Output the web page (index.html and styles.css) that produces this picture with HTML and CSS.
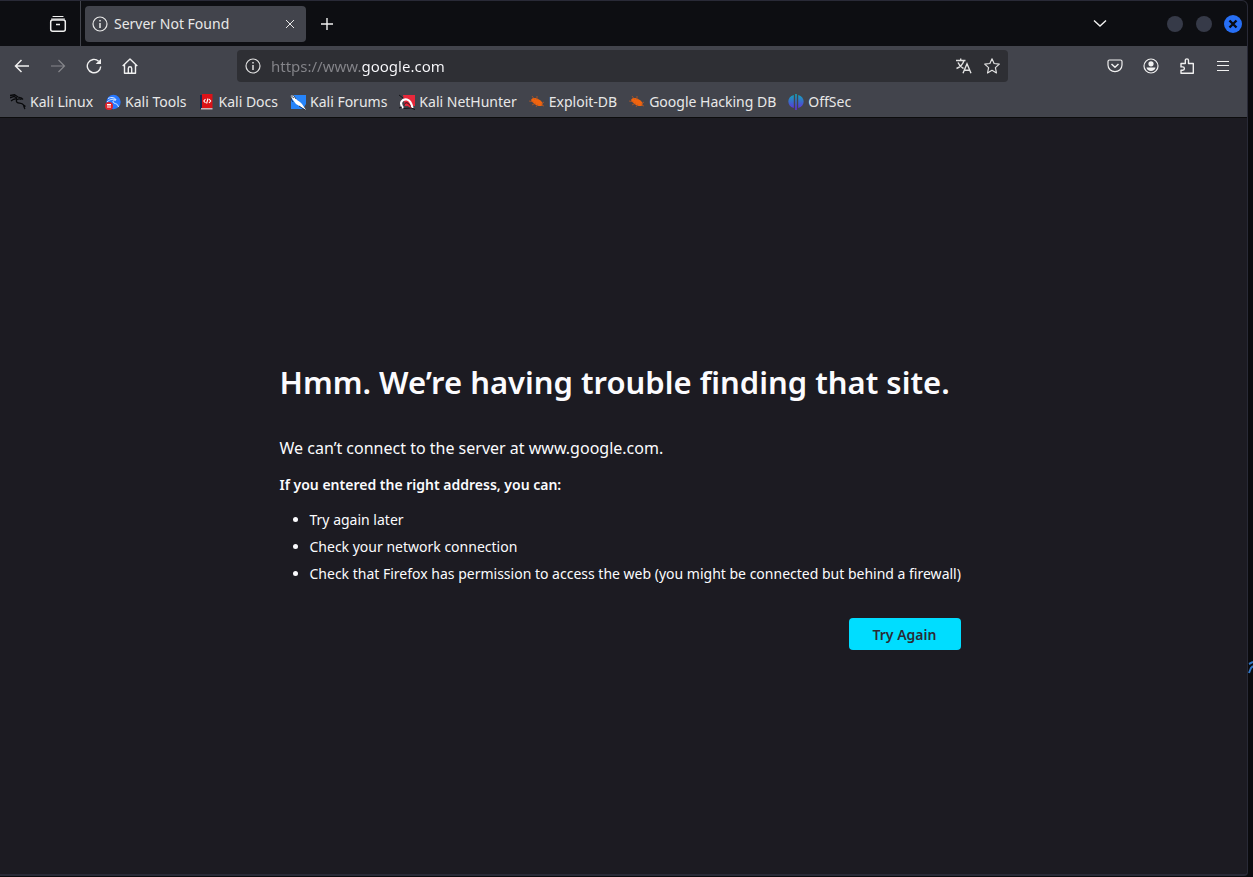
FILE: index.html
```html
<!DOCTYPE html>
<html lang="en">
<head>
<meta charset="utf-8">
<title>Server Not Found</title>
<link rel="stylesheet" href="styles.css">
</head>
<body>
<div class="desktop">
<svg class="wallpaper-mark" viewBox="0 0 5 14" aria-hidden="true"><path d="M1 4 5 2M1 13 3 8 5 6" fill="none" stroke="#3478c8" stroke-width="2"/></svg>
<div class="window">
  <header class="chrome">
    <div class="tabbar">
      <button class="icon-btn view" aria-label="Firefox View"><svg class="icon" viewBox="0 0 18 18"><path d="M4 1.500h10M2.500 4h13" stroke-linecap="round"/><rect x="1.700" y="5" width="14.600" height="11.300" rx="2" stroke-width="1.500"/><path d="M7 9.500h4" stroke-width="1.500"/></svg></button>
      <div class="tab">
        <svg class="icon" viewBox="0 0 16 16"><circle cx="8" cy="8" r="7"/><path d="M8 7v5M8 4v1.600" stroke-width="1.500"/></svg>
        <span class="tab-title">Server Not Found</span>
        <button class="close-tab" aria-label="Close tab"><svg class="icon-small" viewBox="0 0 10 10"><path d="m1 1 8 8M9 1 1 9" stroke-width="1"/></svg></button>
      </div>
      <button class="icon-btn new-tab" aria-label="New tab"><svg class="icon" viewBox="0 0 16 16"><path d="M8 2v12M2 8h12" stroke-width="1.400"/></svg></button>
      <span class="spacer"></span>
      <button class="icon-btn" aria-label="List all tabs"><svg class="icon" viewBox="0 0 16 16"><path d="m2 4.500 6 5.500 6-5.500" stroke-width="1.400"/></svg></button>
      <div class="window-controls">
        <button class="dot" aria-label="Minimize"></button>
        <button class="dot" aria-label="Maximize"></button>
        <button class="dot close" aria-label="Close"><svg viewBox="0 0 18 18"><path d="m5.500 5.500 7 7M12.500 5.500l-7 7"/></svg></button>
      </div>
    </div>
    <nav class="toolbar" aria-label="Navigation">
      <div class="tools">
        <button class="icon-btn" aria-label="Back"><svg class="icon" viewBox="0 0 16 16"><path d="M15 8H1.500M7.500 2l-6 6 6 6" stroke-width="1.500"/></svg></button>
        <button class="icon-btn" aria-label="Forward" disabled><svg class="icon" viewBox="0 0 16 16"><path d="M1 8h13.500M8.500 2l6 6-6 6"/></svg></button>
        <button class="icon-btn" aria-label="Reload"><svg class="icon" viewBox="0 0 16 16"><path d="M12.600 3.200A6.700 6.700 0 1 0 14.700 8.500" stroke-width="1.400"/><path d="M15 .8v5.300H9.700Z" fill="currentColor" stroke="none"/></svg></button>
        <button class="icon-btn" aria-label="Home"><svg class="icon" viewBox="0 0 16 16"><path stroke-linejoin="round" stroke-width="1.400" d="M.7 8 8 1l7.300 7M2.500 6.500v8.800h11V6.500M6.300 15v-4.500a1.700 1.700 0 0 1 3.400 0V15"/></svg></button>
      </div>
      <div class="urlbar">
        <svg class="icon" viewBox="0 0 16 16"><circle cx="8" cy="8" r="7"/><path d="M8 7v5M8 4v1.600" stroke-width="1.500"/></svg>
        <input class="url" type="text" aria-label="Address" value="https://www.google.com">
        <button class="inner-btn" aria-label="Translate page"><svg class="icon" viewBox="0 0 16 16"><path stroke-width="1.400" d="M0 2.500h9.500M4.700.5v2M8 2.500C7 6 4 9 .5 10.500M2 4.500c1 2.500 3.500 5 5.500 6M7 15.300l4-9.500 4 9.500M8.300 12.300h5.400"/></svg></button>
        <button class="inner-btn" aria-label="Bookmark this page"><svg class="icon" viewBox="0 0 16 16"><path stroke-linejoin="round" d="m8 .8 2.100 4.700 5.200.6-3.900 3.500 1.100 5.400L8 12.300 3.500 15l1.100-5.400L.7 6.100l5.200-.6Z"/></svg></button>
      </div>
      <div class="tools">
        <button class="icon-btn" aria-label="Save to Pocket"><svg class="icon" viewBox="0 0 16 16"><path d="M2.500 2h11a1.500 1.500 0 0 1 1.500 1.500V7A7 6.700 0 0 1 1 7V3.500A1.500 1.500 0 0 1 2.500 2Z"/><path d="m4.500 6 3.500 3.200L11.500 6" stroke-width="1.500"/></svg></button>
        <button class="icon-btn" aria-label="Account"><svg class="icon" viewBox="0 0 16 16"><circle cx="8" cy="8" r="7"/><g fill="currentColor" stroke="none"><circle cx="8" cy="5.800" r="2.600"/><path d="M3.500 9.500h9c-.3 2.200-2.200 3.600-4.500 3.600s-4.200-1.400-4.500-3.600Z"/></g></svg></button>
        <button class="icon-btn" aria-label="Extensions"><svg class="icon" viewBox="0 0 16 16"><path stroke-linejoin="round" stroke-width="1.400" d="M2 5.500h4.300V2.500a1.600 1.600 0 0 1 3.200 0v3h4.800v9.800H2v-3h1.700a1.700 1.700 0 0 0 0-3.400H2Z"/></svg></button>
        <button class="icon-btn" aria-label="Open menu"><svg class="icon" viewBox="0 0 16 16"><path d="M2 3.500h12M2 7.500h12M2 12.500h12" stroke-width="1.200"/></svg></button>
      </div>
    </nav>
    <nav class="bookmarks" aria-label="Bookmarks">
      <a href="#"><svg viewBox="0 0 16 16"><path d="M0 1.500 4.500.8 8 3l3.500 1 1.500 1.500M0 3.800l4-1.300 3 1.500M1 7l2.500-1.700L7 4.500M11.500 5.300C7 4 5.500 6.500 7 8.300c1.500 1.500 5 .2 6.500 2.700.6 1.300.3 2.600 1.500 4M13.500 11l2 1.500" fill="none" stroke="#08090b" stroke-width="1.300"/></svg>Kali Linux</a>
      <a href="#"><svg viewBox="0 0 16 16"><circle cx="8.500" cy="8" r="7.200" fill="#2777ff"/><path d="M3 4.500c4-2 7-.5 8 1M2 8c3-3 7-3.500 9-2-3 0-4 2-2 3s4 1 4.500 4" fill="none" stroke="#dcecff"/><circle cx="4" cy="12" r="4" fill="#e12229"/><path d="M2 10.500h4M3 10.500V14M5 10.500V14" stroke="#fff"/></svg>Kali Tools</a>
      <a href="#"><svg viewBox="0 0 16 16"><path d="M1 1h2v14H1Z" fill="#17294f"/><path d="M3 0h10.500v14H3Z" fill="#dc1217"/><path d="M2 14h11.500v1.500H2Z" fill="#cfb3b8"/><path d="M6.500 5 4.800 7l1.700 2M10 5l1.700 2L10 9M9 4.500l-1.400 5" fill="none" stroke="#fff" stroke-width="1.100"/></svg>Kali Docs</a>
      <a href="#"><svg viewBox="0 0 16 16"><path d="M4 1h12v9l-3 5H1V6Z" fill="#2684fa"/><path d="m0 1 4 1 3 4 3 2 2 2 4 6-5-3-5-3-3-4Z" fill="#fff"/><path d="m0 1 4 3M9 12l6 4M1 5l2 3M4 2l2 3" stroke="#17253b" stroke-width=".8"/></svg>Kali Forums</a>
      <a href="#"><svg viewBox="0 0 16 16"><path d="M4 1h12v11H6Z" fill="#e8283b"/><path d="M4 14C0 9 3 4.500 8 5.500c3 .6 4.500 3.500 5.500 8.500" fill="none" stroke="#fff" stroke-width="2.200"/><path d="M5.500 10.500c1-3 4-2 6 2" fill="none" stroke="#15171b"/><path d="M6 11.500c2-2 4 0 6 2.500" fill="none" stroke="#e8283b" stroke-width="1.500"/><path d="m0 1 4 3M0 14l3-1M5 14.500l7-.5 4 1.500" stroke="#15171b" fill="none"/></svg>Kali NetHunter</a>
      <a href="#"><svg viewBox="0 0 16 16"><path d="M2 6c1-3 5-2.500 8-.5 3 1.500 4.500 4.500 3 6-3 2-9-1.500-11-5.500Z" fill="#f0640f"/><path d="m0 7 5 1M3 2l3 4M8 2v4M15 8l-3 2M3 11l4-2M7 13l2-3M15 12l-3-1" stroke="#c75a1c" stroke-width=".7"/></svg>Exploit-DB</a>
      <a href="#"><svg viewBox="0 0 16 16"><path d="M2 6c1-3 5-2.500 8-.5 3 1.500 4.500 4.500 3 6-3 2-9-1.500-11-5.500Z" fill="#f0640f"/><path d="m0 7 5 1M3 2l3 4M8 2v4M15 8l-3 2M3 11l4-2M7 13l2-3M15 12l-3-1" stroke="#c75a1c" stroke-width=".7"/></svg>Google Hacking DB</a>
      <a href="#"><svg viewBox="0 0 16 16"><defs><linearGradient id="offsec" gradientUnits="userSpaceOnUse" x1="0" y1="0" x2="0" y2="16"><stop stop-color="#10a9ba"/><stop offset="1" stop-color="#6528dc"/></linearGradient></defs><path d="M5.800 1v13C-1.500 12-1.500 3 5.800 1ZM10.200 1v13c7.300-2 7.300-11 0-13ZM7.200 0h1.600v16H7.200Z" fill="url(#offsec)"/></svg>OffSec</a>
    </nav>
  </header>
  <main class="page">
    <section class="error">
      <h1>Hmm. We’re having trouble finding that site.</h1>
      <p class="lead">We can’t connect to the server at www.google.com.</p>
      <p class="hint">If you entered the right address, you can:</p>
      <ul>
        <li>Try again later</li>
        <li>Check your network connection</li>
        <li>Check that Firefox has permission to access the web (you might be connected but behind a firewall)</li>
      </ul>
      <div class="actions"><button class="primary">Try Again</button></div>
    </section>
  </main>
</div>
</div>
</body>
</html>
```
FILE: styles.css
```css
* { box-sizing: border-box; }
body {
  margin: 0;
  font-family: "Noto Sans", sans-serif;
  font-size: 14px;
  color: #fbfbfe;
}
button {
  margin: 0;
  padding: 0;
  border: 0;
  background: none;
  color: inherit;
  font: inherit;
}
svg { display: block; flex: none; }
.desktop {
  position: relative;
  display: flex;
  min-height: 100vh;
  padding: 0 5px 1px 0;
  background: #0b0b0e;
}
.wallpaper-mark {
  position: absolute;
  right: 0;
  top: 660px;
  width: 5px;
  height: 14px;
}
.window {
  display: flex;
  flex: 1;
  flex-direction: column;
  min-width: 0;
  border: solid #292a37;
  border-width: 1px 1px 2px 0;
  border-radius: 0 6px 4px 0;
  background: #1c1b22;
  overflow: hidden;
}
.chrome { background: #42444c; border-bottom: 1px solid #0c0c0d; }
.tabbar {
  display: flex;
  align-items: center;
  height: 45px;
  padding-right: 5px;
  background: #0d0e12;
}
.icon { width: 16px; height: 16px; }
.icon, .icon-small { fill: none; stroke: currentColor; stroke-width: 1.2; }
.icon-small { width: 10px; height: 10px; }
.icon-btn {
  display: grid;
  place-items: center;
  width: 36px;
  height: 32px;
  color: #f0f0f0;
}
.icon-btn:disabled { color: #85868b; }
.view { width: 81px; height: 45px; padding-left: 36px; border-right: 1px solid #42444c; }
.view .icon { width: 18px; height: 18px; }
.tab {
  display: flex;
  align-items: center;
  gap: 6px;
  width: 221px;
  height: 36px;
  margin: 0 3px 0 4px;
  padding: 0 10px 0 7px;
  border-radius: 4px;
  background: #42444c;
  color: #e8e8e8;
}
.tab-title { flex: 1; }
.close-tab { display: grid; place-items: center; width: 12px; height: 20px; }
.spacer { flex: 1; }
.window-controls { display: flex; align-items: center; gap: 13px; margin-left: 49px; }
.dot { width: 16px; height: 16px; border-radius: 50%; background: #363a48; }
.dot.close { width: 18px; height: 18px; margin-left: -1px; background: #276ff5; }
.dot.close path { stroke: #080b12; stroke-width: 2.4; }
.toolbar { display: flex; align-items: center; height: 40px; padding: 0 6px 0 4px; }
.tools { display: flex; }
.urlbar {
  display: flex;
  flex: 1;
  align-items: center;
  gap: 12px;
  height: 32px;
  min-width: 0;
  margin: 0 89px;
  padding: 0 8px;
  border-radius: 4px;
  background: #2e2f34;
  color: #e0e0e0;
}
.url {
  flex: 1;
  min-width: 0;
  margin-left: -2px;
  padding: 0;
  border: 0;
  outline: 0;
  background: linear-gradient(90deg, #85858a 90px, #fbfbfe 90px);
  background-clip: text;
  -webkit-background-clip: text;
  color: transparent;
  font: inherit;
  font-size: 15px;
}
.bookmarks { display: flex; align-items: center; gap: 12px; height: 31px; padding: 0 10px; }
.bookmarks a { display: flex; align-items: center; gap: 4px; color: #e8e8e8; text-decoration: none; white-space: nowrap; }
.bookmarks svg { width: 16px; height: 16px; }
.page { display: flex; flex: 1; align-items: center; justify-content: center; padding-top: 16px; }
.error { width: 688px; }
h1 { margin: 0 0 29px; font-size: 31px; line-height: 48px; font-weight: 600; }
.lead { margin: 0 0 12px; font-size: 16px; line-height: 26px; }
.hint { margin: 0 0 9px; font-weight: 600; line-height: 24px; }
ul { margin: 0; padding-left: 30px; }
li { line-height: 27px; }
.actions { display: flex; justify-content: flex-end; margin-top: 31px; padding-right: 7px; }
.primary {
  width: 112px;
  height: 32px;
  border-radius: 4px;
  background: #00ddff;
  color: #2b2a33;
  font-weight: 600;
}
```
